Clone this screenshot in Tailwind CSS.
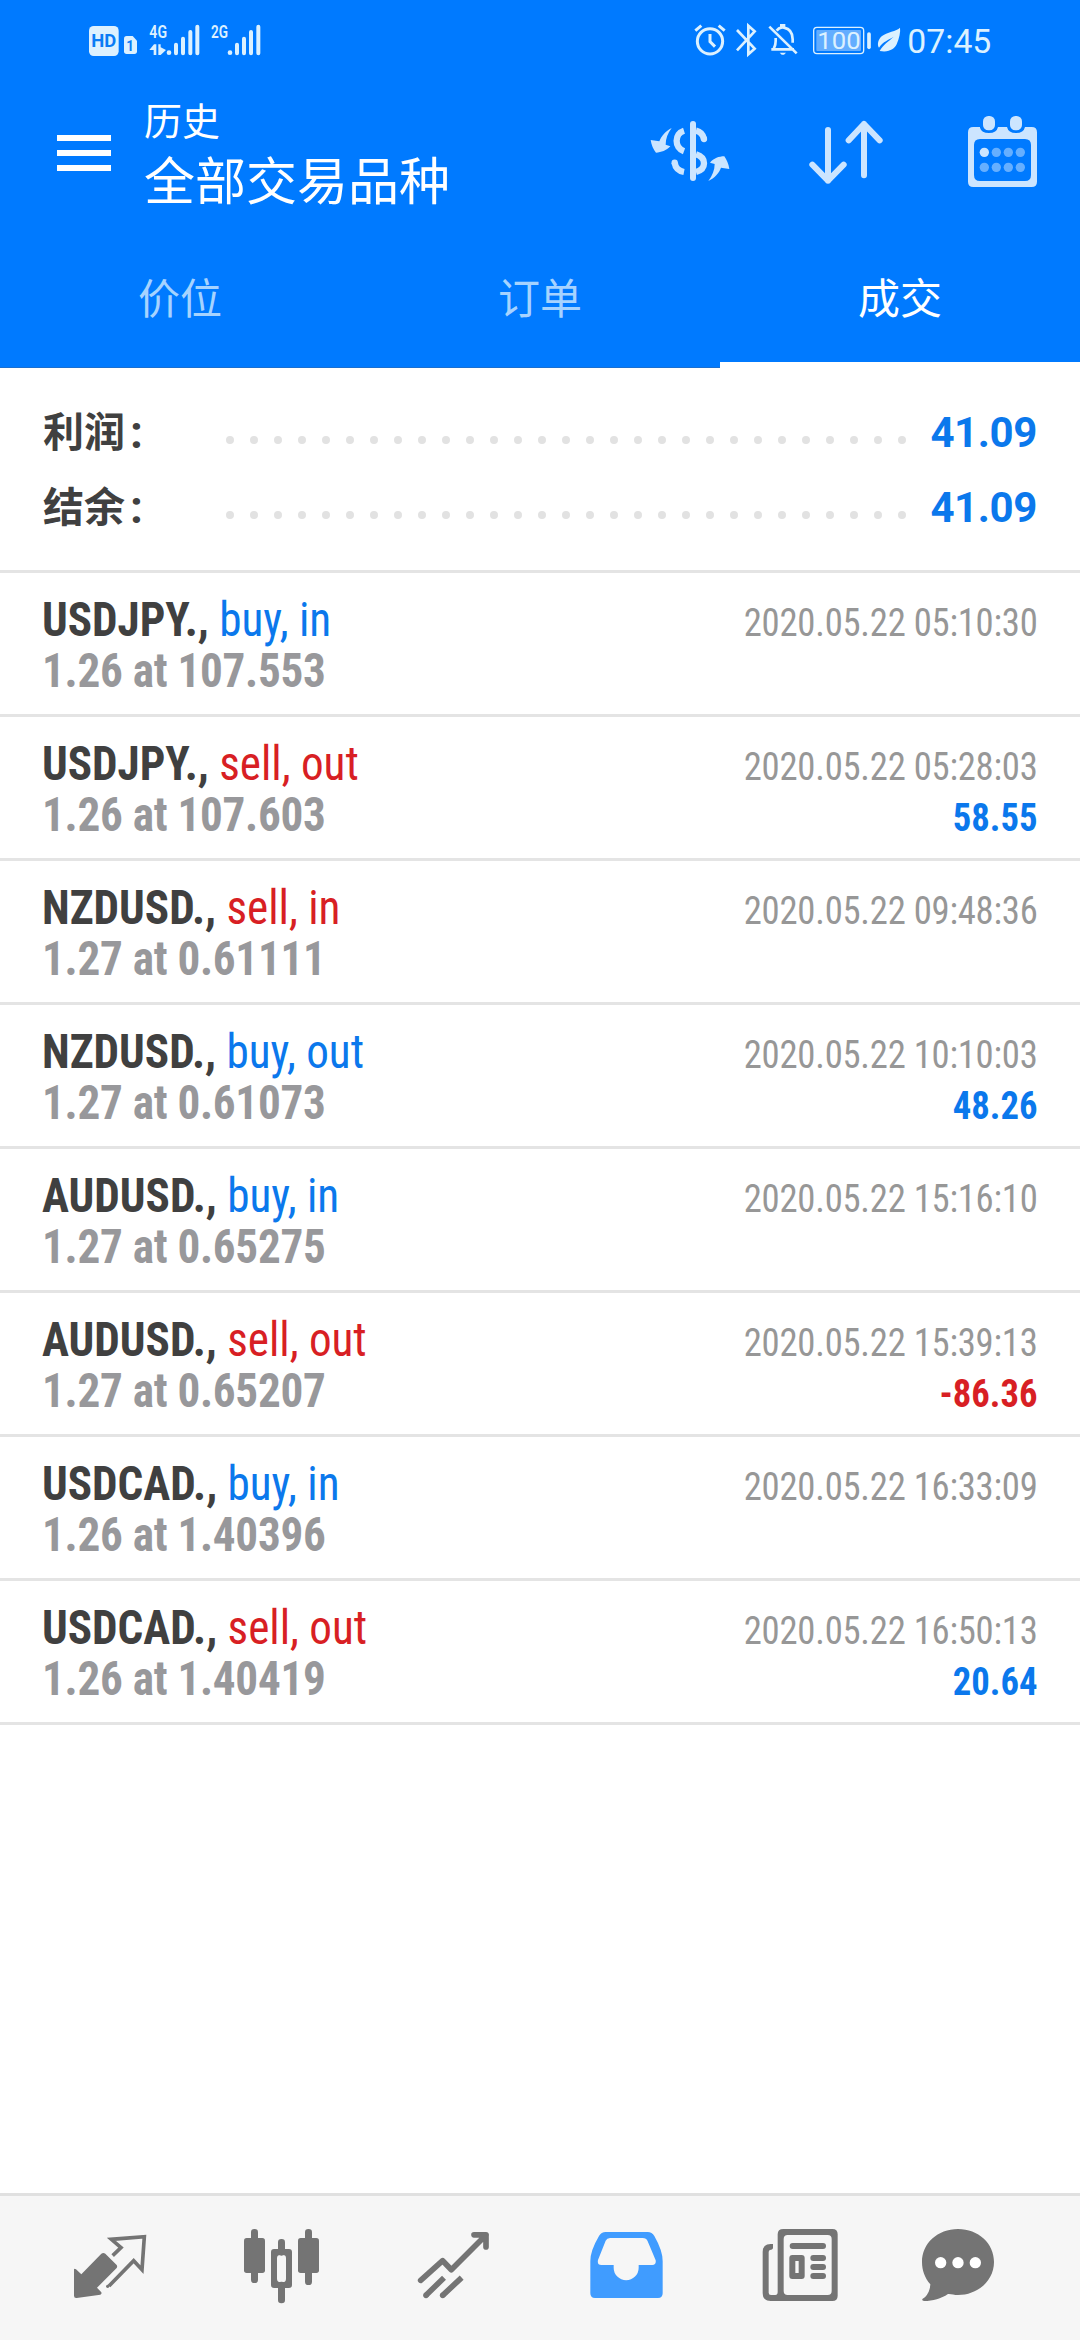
<!DOCTYPE html>
<html lang="zh-CN">
<head>
<meta charset="utf-8">
<title>历史</title>
<script src="https://cdn.jsdelivr.net/npm/@tailwindcss/browser@4"></script>
</head>
<body class="w-[1080px] h-[2340px] flex flex-col bg-white overflow-hidden font-['Roboto','Noto_Sans_CJK_SC',sans-serif]">

<header class="h-[368px] shrink-0 bg-[#007aff] text-white flex flex-col">
  <!-- status bar -->
  <div class="h-[90px] pt-[10px] pl-[70px] pr-[70px] flex justify-between">
    <svg class="w-[220px] h-[60px]" viewBox="0 0 660 180" fill="#dcf1ff">
      <rect x="57" y="48" width="89" height="90" rx="14"/>
      <text x="64" y="112" font-size="53" font-weight="700" fill="#0a7cf5" textLength="75" lengthAdjust="spacingAndGlyphs">HD</text>
      <path d="M170 78H188L201 92V124Q201 132 193 132H170Q162 132 162 124V86Q162 78 170 78Z"/>
      <text x="169" y="122" font-size="46" font-weight="700" fill="#0a7cf5" textLength="23" lengthAdjust="spacingAndGlyphs">1</text>
      <text x="238" y="83" font-size="54" font-weight="600" textLength="53" lengthAdjust="spacingAndGlyphs">4G</text>
      <path d="M238 120L252 103H259V135H251V120ZM265 103H272V112L288 120L272 135H265Z"/>
      <circle cx="297" cy="128" r="7"/>
      <g stroke="#dcf1ff" stroke-width="12" stroke-linecap="round"><path d="M318 104V130M339 86V130M361 66V130M382 50V130M501 104V130M522 86V130M543 66V130M565 50V130"/></g>
      <text x="423" y="83" font-size="54" font-weight="600" textLength="51" lengthAdjust="spacingAndGlyphs">2G</text>
      <circle cx="480" cy="128" r="7"/>
    </svg>
    <svg class="w-[330px] h-[60px]" viewBox="0 0 990 180" fill="none" stroke="#dcf1ff" stroke-width="9">
      <circle cx="90" cy="94" r="38"/>
      <path d="M90 72V95L105 110M46 62L64 47M116 47L134 62"/>
      <path d="M171 60L224 116L205 133V47L224 64L171 121" stroke-width="8"/>
      <path d="M274 118H342M281 115Q288 105 287 84M290 62Q296 54 304 53V46H312V53Q338 58 338 88V98M268 50L350 130" stroke-width="8"/>
      <path d="M299 128H318L312 134H305Z" fill="#dcf1ff" stroke="none"/>
      <rect x="401" y="52" width="150" height="79" rx="10" stroke-width="4"/>
      <rect x="409" y="60" width="134" height="63" rx="3" fill="#63adff" stroke="none"/>
      <path d="M567 72V112" stroke-width="11" stroke-linecap="round"/>
      <text x="412" y="117" font-size="74" fill="#dcf1ff" stroke="none" textLength="130" lengthAdjust="spacingAndGlyphs">100</text>
      <path d="M660 53C650 64 620 66 605 79C592 91 592 107 597 113C610 94 625 90 641 80C625 96 610 102 599 123C628 128 643 117 650 103C658 84 662 66 660 53Z" fill="#dcf1ff" stroke="none"/>
      <text x="682" y="128" font-size="99" fill="#dcf1ff" stroke="none" textLength="252" lengthAdjust="spacingAndGlyphs">07:45</text>
    </svg>
  </div>

  <!-- app bar -->
  <div class="h-[140px] pl-[57px] pr-[20px] flex">
    <div class="w-[54px] pt-[45px] flex flex-col gap-[9px]">
      <span class="h-[6px] bg-white"></span><span class="h-[6px] bg-white"></span><span class="h-[6px] bg-white"></span>
    </div>
    <div class="ml-[33px] flex-1 flex flex-col">
      <div class="mt-[8px] text-[38px] leading-[48px]">历史</div>
      <div class="mt-[6px] text-[51px] leading-[62px]">全部交易品种</div>
    </div>
    <div class="pt-[10px] flex">
      <svg class="w-[140px] h-[110px]" viewBox="0 0 420 330" fill="#cce5ff">
        <path d="M125 84C106 94 94 109 88 124L62 120C64 135 70 148 78 158C94 157 109 152 121 139L107 134C107 115 113 100 125 84Z"/>
        <path d="M235 243C254 234 267 219 273 203L298 207C296 192 290 179 283 169C267 169 251 175 240 188L254 192C254 211 247 227 235 243Z"/>
        <path d="M189 72V234" stroke="#cce5ff" stroke-width="18" stroke-linecap="round"/>
        <path d="M162 92C133 101 132 143 162 154M134 188C136 203 146 213 162 216M198 92C211 95 219 104 222 117M198 163C230 173 230 207 198 216" fill="none" stroke="#cce5ff" stroke-width="19"/>
        <circle cx="222" cy="117" r="9.5"/><circle cx="134" cy="188" r="9.5"/>
      </svg>
      <svg class="w-[140px] h-[110px]" viewBox="420 0 420 330" fill="none" stroke="#cce5ff" stroke-width="18" stroke-linecap="round" stroke-linejoin="round">
        <path d="M594 90V242M547 194L594 242L641 194M702 226V72M656 121L702 72L749 121"/>
      </svg>
      <svg class="w-[150px] h-[110px]" viewBox="840 0 450 330" fill="#cce5ff">
        <path fill-rule="evenodd" d="M1030 81H1050V83Q1054 99 1077 99Q1100 99 1104 81H1131Q1135 99 1158 99Q1181 99 1185 81H1205Q1221 81 1221 97V245Q1221 261 1205 261H1030Q1014 261 1014 245V97Q1014 81 1030 81ZM1050 117Q1032 117 1032 135V225Q1032 243 1050 243H1185Q1203 243 1203 225V135Q1203 117 1185 117Z"/>
        <rect x="1059" y="48" width="36" height="43" rx="16"/><rect x="1140" y="48" width="36" height="43" rx="16"/>
        <circle cx="1063" cy="157" r="14"/>
        <g fill="#66afff"><circle cx="1099" cy="157" r="14"/><circle cx="1135" cy="157" r="14"/><circle cx="1171" cy="157" r="14"/><circle cx="1063" cy="202" r="14"/><circle cx="1099" cy="202" r="14"/><circle cx="1135" cy="202" r="14"/><circle cx="1171" cy="202" r="14"/></g>
      </svg>
    </div>
  </div>

  <!-- tabs -->
  <nav class="flex-1 grid grid-cols-3 text-center text-[42px] leading-[60px]">
    <div class="pt-[40px] text-[#a6d3ff] border-b border-[#1a6fd0]">价位</div>
    <div class="pt-[40px] text-[#a6d3ff] border-b border-[#1a6fd0]">订单</div>
    <div class="pt-[40px] border-b-[6px] border-white">成交</div>
  </nav>
</header>

<section class="h-[205px] shrink-0 border-b-[3px] border-[#e4e4e4] pl-[43px] pr-[43px] pt-[27px] text-[42px] leading-[75px] font-bold">
  <div class="flex h-[75px]">
    <div class="w-[181px] flex pt-px text-[#404040] text-[41px]"><span>利润</span><span class="ml-[5px] text-[46px] leading-[73px]">:</span></div>
    <svg class="w-[690px] h-[75px]" viewBox="0 0 690 75"><path d="M6 45H680" stroke="#e2e2e2" stroke-width="8" stroke-linecap="round" stroke-dasharray="0 24"/></svg>
    <span class="flex-1 text-right tracking-[-0.4px] text-[#0b78ec]">41.09</span>
  </div>
  <div class="flex h-[75px]">
    <div class="w-[181px] flex pt-px text-[#404040] text-[41px]"><span>结余</span><span class="ml-[5px] text-[46px] leading-[73px]">:</span></div>
    <svg class="w-[690px] h-[75px]" viewBox="0 0 690 75"><path d="M6 45H680" stroke="#e2e2e2" stroke-width="8" stroke-linecap="round" stroke-dasharray="0 24"/></svg>
    <span class="flex-1 text-right tracking-[-0.4px] text-[#0b78ec]">41.09</span>
  </div>
</section>

<main id="deals" class="flex-1 font-['Roboto_Condensed','Roboto',sans-serif] font-stretch-condensed leading-[51px]"></main>
<template id="row">
  <div class="h-[144px] border-b-[3px] border-[#e4e4e4] pl-[42px] pr-[42px] flex justify-between">
    <div class="pt-[21px] text-[48px] whitespace-nowrap origin-left scale-x-[0.94]">
      <div><b class="font-bold text-[#404040]" data-k="sym"></b> <span data-k="side"></span></div>
      <div class="font-bold tracking-[-0.27px] text-[#98989b]" data-k="vol"></div>
    </div>
    <div class="pt-[25px] text-[39px] text-right whitespace-nowrap origin-right scale-x-[0.94]">
      <div class="tracking-[-0.25px] text-[#979797]" data-k="time"></div>
      <div class="font-bold" data-k="pl"></div>
    </div>
  </div>
</template>

<footer class="h-[147px] shrink-0 border-t-[3px] border-[#e0e0e0] bg-[#f6f6f6] px-[24px] flex">
  <svg class="w-[172px] h-[144px]" viewBox="-48 48 516 432" fill="#747474">
    <path d="M184 221Q190 217 196 221L230 255Q233 260 230 264L171 323L184 337Q186 342 181 344L110 354Q102 355 102 347V268Q104 264 108 268L124 283Z"/>
    <path d="M218 227L243 203L214 178L313 170L306 269L281 242L207 318" fill="none" stroke="#747474" stroke-width="11" stroke-linecap="butt"/>
    <circle cx="203" cy="319" r="5"/>
  </svg>
  <svg class="w-[172px] h-[144px]" viewBox="468 48 516 432" fill="#747474">
    <rect x="612" y="174" width="63" height="105" rx="8"/><rect x="774" y="174" width="63" height="105" rx="8"/>
    <rect x="633" y="147" width="21" height="162" rx="10"/><rect x="795" y="147" width="21" height="168" rx="10"/>
    <rect x="714" y="177" width="21" height="50" rx="10"/><rect x="714" y="305" width="21" height="65" rx="10"/>
    <path fill-rule="evenodd" d="M702 207H747Q756 207 756 216V315Q756 324 747 324H702Q693 324 693 315V216Q693 207 702 207ZM721 225Q711 225 711 235V296Q711 306 721 306H729Q738 306 738 296V235Q738 225 729 225Z"/>
  </svg>
  <svg class="w-[172px] h-[144px]" viewBox="984 48 516 432" fill="none" stroke="#747474" stroke-width="17" stroke-linejoin="round">
    <path d="M1142 301L1208 242L1234 269L1338 165M1302 164.500H1338V201" stroke-linecap="round"/>
    <path d="M1158 346L1212 293M1208 346L1265 293"/>
    <g fill="#747474" stroke="none"><circle cx="1158" cy="346" r="8.500"/><circle cx="1208" cy="346" r="8.500"/></g>
  </svg>
  <svg class="w-[172px] h-[144px]" viewBox="-60 48 516 432" fill="#409cff">
    <path fill-rule="evenodd" d="M137 156H263Q276 156 283 168Q308 212 308 243V340Q308 354 294 354H105Q91 354 91 340V243Q91 212 117 168Q124 156 137 156ZM150 174Q141 174 137 182L114 240Q111 255 124 255H161V263A37 37 0 0 0 236 263V255H277Q289 255 287 241L263 184Q259 174 248 174Z"/>
  </svg>
  <svg class="w-[172px] h-[144px]" viewBox="456 48 516 432" fill="#747474">
    <path fill-rule="evenodd" d="M670 147H817Q833 147 833 163V347Q833 363 817 363H632Q608 363 608 339V216Q608 192 632 192H639V205Q637 210 630 210Q626 211 626 217V338Q626 345 633 345H646Q653 345 653 336V163Q653 147 670 147ZM683 165Q671 165 671 177V333Q671 345 683 345H803Q815 345 815 333V177Q815 165 803 165Z"/>
    <rect x="689" y="189" width="109" height="18" rx="9"/>
    <path fill-rule="evenodd" d="M697 225H725Q734 225 734 234V288Q734 297 725 297H697Q688 297 688 288V234Q688 225 697 225ZM706 243V279H716V243Z"/>
    <rect x="751" y="225" width="47" height="18" rx="9"/><rect x="751" y="252" width="47" height="18" rx="9"/><rect x="751" y="279" width="47" height="18" rx="9"/>
  </svg>
  <svg class="w-[172px] h-[144px]" viewBox="972 48 516 432" fill="#747474">
    <path d="M1194 147C1255 147 1302 190 1302 246C1302 303 1252 345 1194 345C1182 345 1172 341 1164 342C1143 356 1119 363 1092 363Q1084 361 1088 356C1103 348 1110 330 1111 313C1095 294 1086 272 1086 246C1086 190 1133 147 1194 147Z"/>
    <g fill="#fff"><circle cx="1142" cy="248" r="17"/><circle cx="1194" cy="248" r="17"/><circle cx="1246" cy="248" r="17"/></g>
  </svg>
</footer>

<script>
const deals = [
  ["USDJPY.,", "buy, in", "1.26 at 107.553", "2020.05.22 05:10:30", ""],
  ["USDJPY.,", "sell, out", "1.26 at 107.603", "2020.05.22 05:28:03", "58.55"],
  ["NZDUSD.,", "sell, in", "1.27 at 0.61111", "2020.05.22 09:48:36", ""],
  ["NZDUSD.,", "buy, out", "1.27 at 0.61073", "2020.05.22 10:10:03", "48.26"],
  ["AUDUSD.,", "buy, in", "1.27 at 0.65275", "2020.05.22 15:16:10", ""],
  ["AUDUSD.,", "sell, out", "1.27 at 0.65207", "2020.05.22 15:39:13", "-86.36"],
  ["USDCAD.,", "buy, in", "1.26 at 1.40396", "2020.05.22 16:33:09", ""],
  ["USDCAD.,", "sell, out", "1.26 at 1.40419", "2020.05.22 16:50:13", "20.64"]
];
const list = document.getElementById("deals"), tpl = document.getElementById("row");
const blue = "text-[#0b78ec]", red = "text-[#d81f24]";
for (const d of deals) {
  const n = tpl.content.cloneNode(true);
  ["sym", "side", "vol", "time", "pl"].forEach((k, i) => n.querySelector(`[data-k=${k}]`).textContent = d[i]);
  n.querySelector("[data-k=side]").className = d[1].startsWith("buy") ? blue : red;
  n.querySelector("[data-k=pl]").classList.add(d[4].startsWith("-") ? red : blue);
  list.append(n);
}
</script>
</body>
</html>
